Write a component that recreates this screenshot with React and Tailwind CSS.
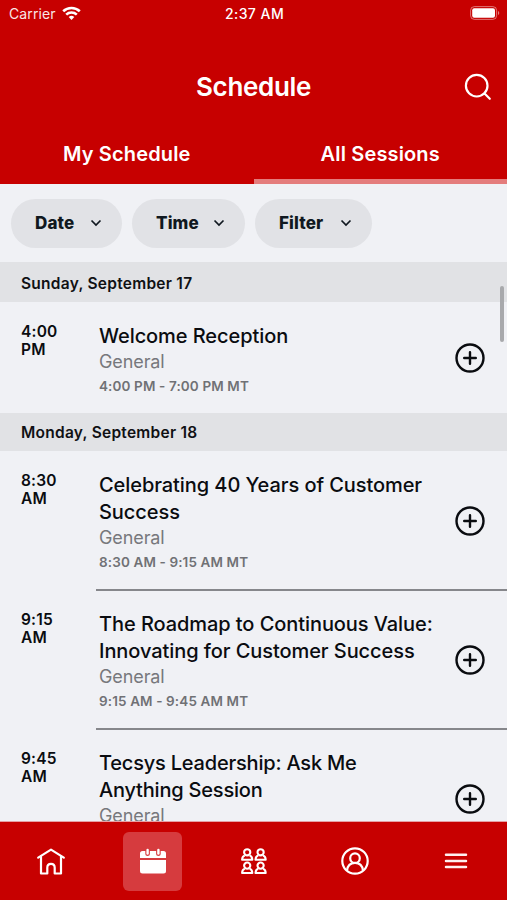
import React from "react";

const sections = [
  {
    day: "Sunday, September 17",
    bar: "h-10 pt-1",
    sessions: [
      { start: ["4:00", "PM"], title: ["Welcome Reception"], range: "4:00 PM - 7:00 PM MT", height: "h-[111px]" },
    ],
  },
  {
    day: "Monday, September 18",
    bar: "h-[38px] pt-px",
    sessions: [
      { start: ["8:30", "AM"], title: ["Celebrating 40 Years of Customer", "Success"], range: "8:30 AM - 9:15 AM MT", height: "h-[139px]" },
      { start: ["9:15", "AM"], title: ["The Roadmap to Continuous Value:", "Innovating for Customer Success"], range: "9:15 AM - 9:45 AM MT", height: "h-[139px]", divided: true },
      { start: ["9:45", "AM"], title: ["Tecsys Leadership: Ask Me", "Anything Session"], height: "h-[139px]", divided: true, tight: true },
    ],
  },
];

function StatusBar() {
  return (
    <div className="grid h-7 grid-cols-3 items-center pr-[7px] pl-[9px] text-[14px] leading-none">
      <div className="flex items-center gap-[6px]">
        <span className="tracking-[0.1px] opacity-90">Carrier</span>
        <svg className="-mt-0.5" width="19" height="15" viewBox="0 0 19 15" fill="none" stroke="white" strokeWidth="2.600">
          <path d="M1.2 5.3a12 12 0 0 1 16.6 0" />
          <path d="M4.2 8.6a7.7 7.7 0 0 1 10.6 0" />
          <path d="M6.7 11.1a4 4 0 0 1 5.6 0L9.500 14Z" fill="white" stroke="none" />
        </svg>
      </div>
      <span className="text-center font-medium tracking-[0.45px] whitespace-nowrap">2:37 AM</span>
      <svg className="-mt-0.5 justify-self-end" width="30" height="14" viewBox="0 0 30 14" fill="none">
        <rect x="0.600" y="0.600" width="26" height="12.800" rx="3.800" stroke="white" strokeOpacity="0.45" strokeWidth="1" />
        <rect x="2.200" y="2.200" width="22.800" height="9.600" rx="2" fill="white" />
        <path d="M28 5v4c1.700-.6 1.700-3.400 0-4Z" fill="white" fillOpacity="0.5" />
      </svg>
    </div>
  );
}

function Header() {
  return (
    <header className="flex h-[184px] shrink-0 flex-col bg-[#c70000] text-white">
      <StatusBar />
      <div className="grid h-[102px] grid-cols-[1fr_auto_1fr] items-center pt-[15px]">
        <span />
        <h1 className="text-[26px] font-semibold tracking-[-0.35px]">Schedule</h1>
        <svg className="mr-[15px] justify-self-end" width="28" height="28" viewBox="0 0 28 28" fill="none" stroke="white" strokeWidth="2.2" strokeLinecap="round">
          <circle cx="12.700" cy="12.700" r="10.800" />
          <path d="m20.500 20.500 5.300 5.300" />
        </svg>
      </div>
      <nav className="grid flex-1 grid-cols-2 text-[20px] font-semibold tracking-[0.15px]">
        <div className="flex justify-center pt-[9px]">My Schedule</div>
        <div className="flex justify-center border-b-[5px] border-[#e47c7c] pt-[9px]">All Sessions</div>
      </nav>
    </header>
  );
}

function Pill({ label, width }) {
  return (
    <button className={`flex h-[49px] items-center justify-between rounded-full bg-[#e1e2e6] pr-[20px] pl-[24px] text-[17px] font-extrabold tracking-[0.15px] text-[#101820] ${width}`}>
      <span className="pt-px">{label}</span>
      <svg width="12" height="8" viewBox="0 0 12 8" fill="none" stroke="currentColor" strokeWidth="1.700">
        <path d="m1.500 1.500 4.500 4.500 4.500-4.500" />
      </svg>
    </button>
  );
}

function AddIcon() {
  return (
    <svg className="shrink-0" width="30" height="30" viewBox="0 0 30 30" fill="none" stroke="#0a0c10" strokeWidth="2.400">
      <circle cx="15" cy="15" r="13.500" />
      <path d="M15 9.200v11.600M9.200 15h11.600" strokeLinecap="round" />
    </svg>
  );
}

function Session({ start, title, range, height, divided, tight }) {
  return (
    <li className={`flex shrink-0 ${height}`}>
      <div className="w-24 pt-[21px] pl-[21px] text-[15.5px] leading-[18px] font-semibold tracking-[0.2px] text-[#0a0c10]">
        {start.map((part) => <div key={part}>{part}</div>)}
      </div>
      <div className={`flex flex-1 items-center justify-between pr-[22px] pl-[3px] ${divided ? "-mt-px border-t-2 border-[#86878b]" : ""}`}>
        <div className={`h-full whitespace-nowrap ${divided ? "pt-5" : "pt-[21px]"}`}>
          {title.map((line) => (
            <div key={line} className={`text-[20px] leading-[27px] font-medium text-[#0a0c10] ${tight ? "tracking-[-0.2px]" : "tracking-[-0.07px]"}`}>{line}</div>
          ))}
          <div className="text-[18px] leading-6 tracking-[-0.1px] text-[#77787c]">General</div>
          {range && <div className="text-[13.5px] leading-[25px] font-semibold tracking-[0.12px] text-[#707175]">{range}</div>}
        </div>
        <AddIcon />
      </div>
    </li>
  );
}

function HomeIcon() {
  return (
    <svg className="mt-px" width="28" height="27" viewBox="0 0 28 27" fill="none" stroke="white" strokeWidth="2.200" strokeLinejoin="round" strokeLinecap="round">
      <path d="M1.200 9.600 14 1.600l12.800 8" />
      <path d="M4 8.500v17h6.300v-5.800c0-5 7.400-5 7.400 0v5.800H24v-17" />
    </svg>
  );
}

function CalendarIcon() {
  return (
    <svg className="ml-px" width="26" height="26" viewBox="0 0 26 26" fill="white">
      <path d="M0 10V5.500q0-2.500 2.500-2.500H5.300v3q0 1.900 2.300 1.900t2.300-1.900V3h6.200v3q0 1.900 2.300 1.900t2.300-1.900V3h2.800Q26 3 26 5.500V10Z" />
      <rect x="6.400" y="0.800" width="2.400" height="6" rx="1.200" />
      <rect x="17.200" y="0.800" width="2.400" height="6" rx="1.200" />
      <path d="M0 12h26v11q0 2.500-2.500 2.500h-21Q0 25.500 0 23Z" />
    </svg>
  );
}

function Person({ x, y }) {
  return (
    <g transform={`translate(${x} ${y})`}>
      <circle cx="5.800" cy="4.300" r="3.100" />
      <path d="M3.400 7.400C1.500 7.900.8 9.200.7 11.700h10.200c-.1-2.500-.8-3.800-2.700-4.300" />
    </g>
  );
}

function PeopleIcon() {
  return (
    <svg className="mt-px ml-px" width="26" height="27" viewBox="0 0 26 27" fill="none" stroke="white" strokeWidth="2.100" strokeLinejoin="round">
      <Person x={0.4} y={0} />
      <Person x={13.8} y={0} />
      <Person x={0.4} y={13.3} />
      <Person x={13.8} y={13.3} />
    </svg>
  );
}

function ProfileIcon() {
  return (
    <svg width="28" height="28" viewBox="0 0 28 28" fill="none" stroke="white" strokeWidth="2.200">
      <circle cx="14" cy="14" r="12.700" />
      <circle cx="14" cy="11.200" r="4.800" />
      <path d="M6 23.600c.5-5 3.200-7.800 8-7.800s7.500 2.800 8 7.800" />
    </svg>
  );
}

function MenuIcon() {
  return (
    <svg width="24" height="18" viewBox="0 0 24 18" fill="none" stroke="#fff0f0" strokeWidth="2.500" strokeLinecap="round">
      <path d="M2 2.700h20M2 9h20M2 15h20" />
    </svg>
  );
}

export default function App() {
  return (
    <div className="relative flex h-[900px] w-[507px] flex-col overflow-hidden bg-[#f0f1f5] font-[Inter,'Liberation_Sans',sans-serif]">
      <Header />
      <div className="flex h-[78px] shrink-0 items-center gap-[10px] pl-[11px]">
        <Pill label="Date" width="w-[111px]" />
        <Pill label="Time" width="w-[113px]" />
        <Pill label="Filter" width="w-[117px]" />
      </div>
      <main className="min-h-0 flex-1 overflow-hidden">
        {sections.map(({ day, bar, sessions }) => (
          <section key={day}>
            <h2 className={`flex items-center bg-[#e1e2e5] pl-[21px] text-[15.5px] font-semibold tracking-[0.26px] text-[#101114] ${bar}`}>{day}</h2>
            <ul>
              {sessions.map((session) => <Session key={session.title[0]} {...session} />)}
            </ul>
          </section>
        ))}
      </main>
      <div className="absolute top-[286px] right-[3px] h-14 w-1 rounded-full bg-[#a8a9ac]" />
      <footer className="grid h-[79px] shrink-0 grid-cols-5 items-center justify-items-center border-t border-[#e5a0a4] bg-[#c70000]">
        <HomeIcon />
        <div className="flex h-[59px] w-[59px] items-center justify-center rounded-md bg-[#d63b3e]">
          <CalendarIcon />
        </div>
        <PeopleIcon />
        <ProfileIcon />
        <MenuIcon />
      </footer>
    </div>
  );
}
